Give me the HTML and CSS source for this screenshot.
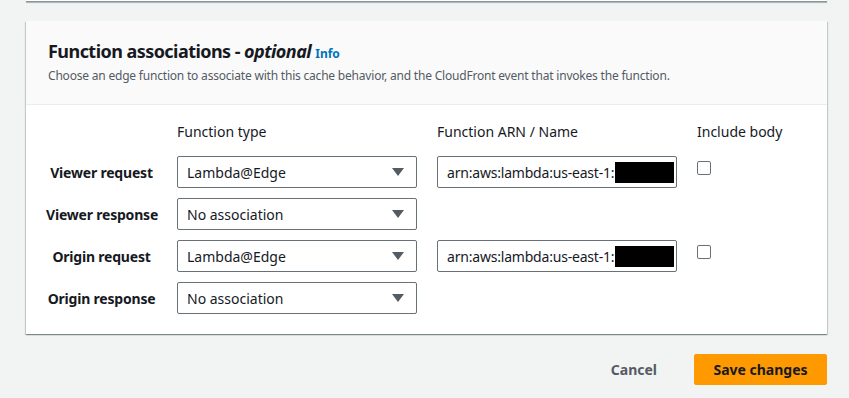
FILE: index.html
```html
<!DOCTYPE html>
<html lang="en">
<head>
    <meta charset="UTF-8">
    <title>Function associations</title>
    <link rel="stylesheet" href="styles.css">
</head>
<body>
    <div class="prev-card"></div>

    <div class="card">
        <div class="card-header">
            <h2>Function associations - <i>optional</i> <a href="#" class="info">Info</a></h2>
            <p class="desc">Choose an edge function to associate with this cache behavior, and the CloudFront event that invokes the function.</p>
        </div>
        <div class="card-body">
            <div class="grid">
                <div></div>
                <div class="col-head">Function type</div>
                <div class="col-head">Function ARN / Name</div>
                <div class="col-head">Include body</div>

                <div class="row-label">Viewer request</div>
                <div class="select">Lambda@Edge<span class="caret"></span></div>
                <div class="input">arn:aws:lambda:us-east-1:1<span class="redacted"></span></div>
                <div class="check-cell"><span class="checkbox"></span></div>

                <div class="row-label">Viewer response</div>
                <div class="select">No association<span class="caret"></span></div>
                <div></div>
                <div></div>

                <div class="row-label">Origin request</div>
                <div class="select">Lambda@Edge<span class="caret"></span></div>
                <div class="input">arn:aws:lambda:us-east-1:1<span class="redacted"></span></div>
                <div class="check-cell"><span class="checkbox"></span></div>

                <div class="row-label">Origin response</div>
                <div class="select">No association<span class="caret"></span></div>
                <div></div>
                <div></div>
            </div>
        </div>
    </div>

    <div class="actions">
        <button class="btn-link">Cancel</button>
        <button class="btn-primary">Save changes</button>
    </div>
</body>
</html>
```

FILE: styles.css
```css
body {
    margin: 0;
    padding: 0 22px 0 26px;
    background-color: #f2f3f3;
    color: #16191f;
    font-family: "Noto Sans", "Open Sans", sans-serif;
    font-size: 14px;
}
.prev-card {
    height: 2px;
    background: #fff;
    border-bottom: 1px solid #879596;
    box-shadow: 0 1px 1px rgba(0, 28, 36, 0.3);
    margin-top: -1px;
}
.card {
    margin-top: 19px;
    background: #fff;
    box-shadow: 0 1px 1px 0 rgba(0, 28, 36, 0.3), 1px 1px 1px 0 rgba(0, 28, 36, 0.15), -1px 1px 1px 0 rgba(0, 28, 36, 0.15);
}
.card-header {
    background: #fafafa;
    border-bottom: 1px solid #eaeded;
    padding: 19px 20px 20px 22px;
}
.card-header h2 {
    margin: 0;
    font-size: 18px;
    line-height: 22px;
    font-weight: bold;
    letter-spacing: -0.55px;
}
.card-header h2 i {
    font-weight: bold;
}
.info {
    color: #0073bb;
    font-size: 12px;
    font-weight: bold;
    letter-spacing: 0;
    text-decoration: none;
}
.desc {
    margin: 3px 0 0;
    font-size: 12px;
    line-height: 16px;
    letter-spacing: -0.2px;
    color: #545b64;
}
.card-body {
    padding: 17px 20px 20px;
}
.grid {
    display: grid;
    grid-template-columns: 111px 240px 240px auto;
    column-gap: 20px;
    row-gap: 10px;
    align-items: center;
}
.col-head {
    line-height: 20px;
    color: #16191f;
    margin-bottom: 4px;
}
.row-label {
    font-weight: bold;
    text-align: center;
    white-space: nowrap;
    letter-spacing: -0.2px;
}
.select, .input {
    height: 32px;
    box-sizing: border-box;
    border: 1px solid #687078;
    border-radius: 2px;
    display: flex;
    align-items: center;
    padding: 0 9px;
}
.select {
    justify-content: space-between;
}
.caret {
    width: 0;
    height: 0;
    border-left: 6px solid transparent;
    border-right: 6px solid transparent;
    border-top: 8px solid #545b64;
    margin-right: 3px;
}
.input {
    position: relative;
    overflow: hidden;
    letter-spacing: -0.2px;
}
.redacted {
    position: absolute;
    left: 177px;
    top: 5px;
    width: 59px;
    height: 21px;
    background: #000;
}
.check-cell {
    align-self: start;
    padding-top: 5px;
}
.checkbox {
    display: block;
    width: 14px;
    height: 14px;
    box-sizing: border-box;
    border: 1px solid #687078;
    border-radius: 2px;
}
.actions {
    display: flex;
    justify-content: flex-end;
    align-items: center;
    gap: 17px;
    margin-top: 20px;
}
button {
    font-family: "Noto Sans", "Open Sans", sans-serif;
    font-size: 14px;
    font-weight: bold;
    height: 31px;
    border-radius: 2px;
    padding: 0 20px;
    white-space: nowrap;
    cursor: pointer;
}
.btn-link {
    background: none;
    border: none;
    color: #545b64;
}
.btn-primary {
    background: #ff9900;
    border: 1px solid #ff9900;
    color: #16191f;
    width: 133px;
    padding: 0;
}
```
